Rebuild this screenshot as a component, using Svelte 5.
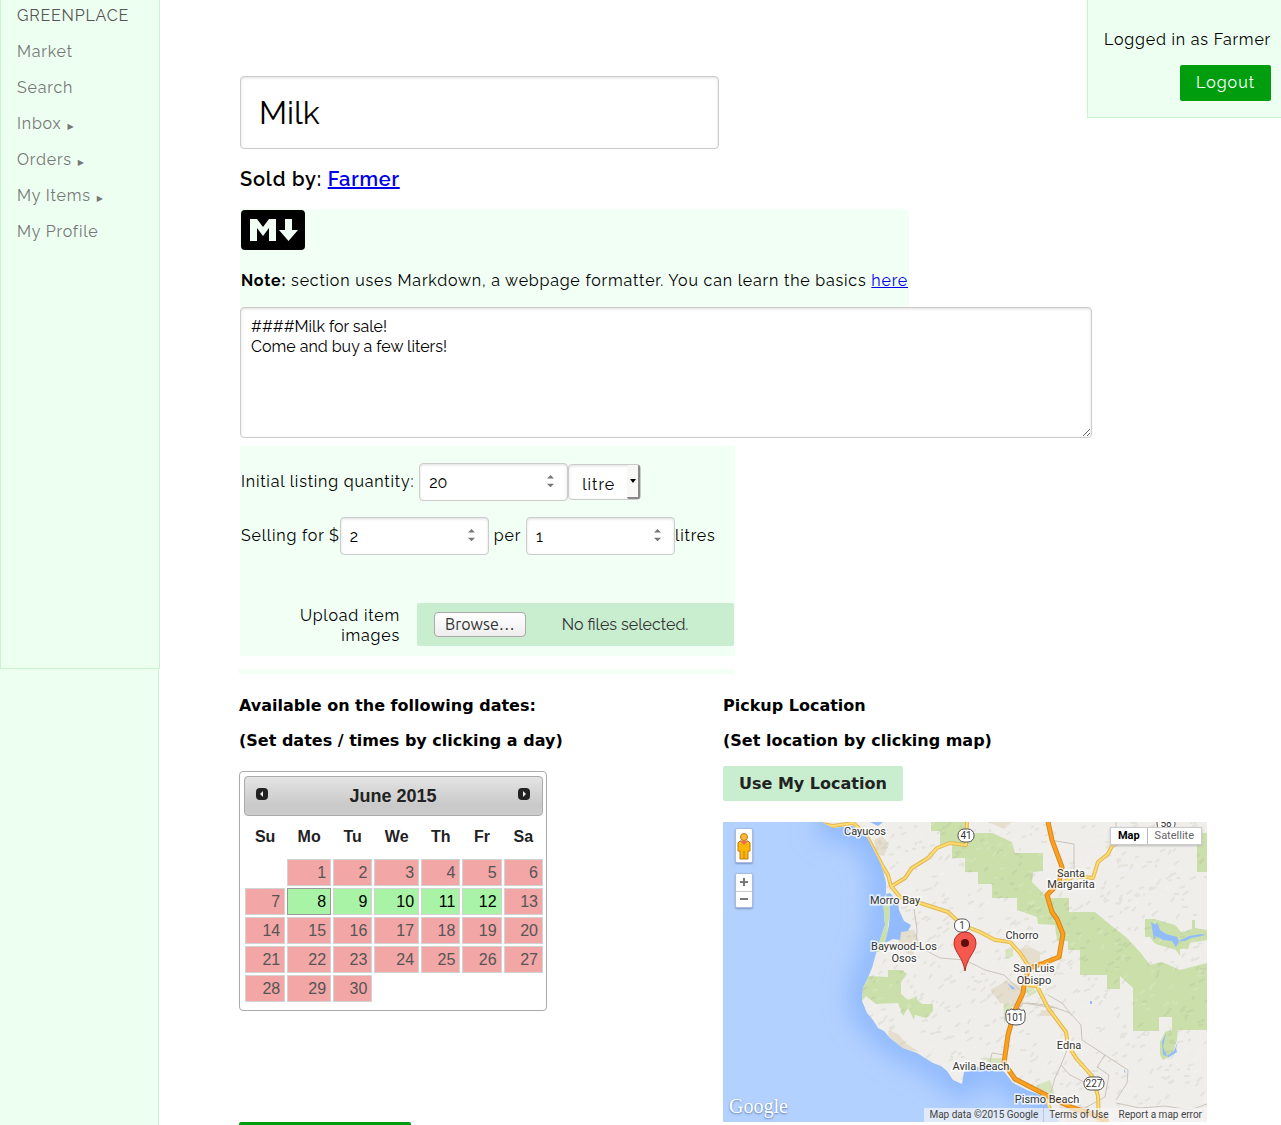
<script>
  const navItems = [
    { label: 'Market' },
    { label: 'Search' },
    { label: 'Inbox', sub: true },
    { label: 'Orders', sub: true },
    { label: 'My Items', sub: true },
    { label: 'My Profile' }
  ];

  const weekdays = ['Su', 'Mo', 'Tu', 'We', 'Th', 'Fr', 'Sa'];
  const weeks = [0, 1, 2, 3, 4].map((w) =>
    weekdays.map((_, d) => {
      const day = w * 7 + d;
      return day >= 1 && day <= 30 ? day : null;
    })
  );
  const isOpen = (day) => day >= 8 && day <= 12;

  let title = $state('Milk');
  let description = $state('####Milk for sale!\nCome and buy a few liters!');
  let quantity = $state(20);
  let price = $state(2);
  let per = $state(1);

  // Small strokes that suggest hill relief on the land.
  function relief(count, seed) {
    let s = seed;
    const rnd = () => {
      s = (s * 16807) % 2147483647;
      return s / 2147483647;
    };
    let d = '';
    for (let i = 0; i < count; i++) {
      const x = Math.round(860 + rnd() * 347);
      const y = Math.round(822 + rnd() * 300);
      const a = Math.round(2 + rnd() * 4);
      const b = Math.round(-5 + rnd() * 5);
      d += `M${x} ${y}l${a} ${b}`;
    }
    return d;
  }
  const darkRelief = relief(700, 77);
  const lightRelief = relief(400, 911);

  const land =
    'M822 822L833 828L853 826L866 835L874 850L881 864L886 882L886 894L883 900L885 925L880 940L877 950L872 968L867 980L863 988L862 1001L867 1013L873 1020L878 1028L884 1031L890 1038L903 1048L917 1053L933 1063L941 1066L947 1071L953 1080L962 1084L964 1072L977 1067L1003 1070L1013 1083L1027 1090L1043 1096L1048 1107L1060 1122H1207V822Z';

  const labels = [
    [865, 835, 'Cayucos'],
    [895, 904, 'Morro Bay'],
    [904, 950, 'Baywood-Los'],
    [904, 962, 'Osos'],
    [1071, 877, 'Santa'],
    [1071, 888, 'Margarita'],
    [1022, 939, 'Chorro'],
    [1034, 972, 'San Luis'],
    [1034, 984, 'Obispo'],
    [1069, 1049, 'Edna'],
    [981, 1070, 'Avila Beach'],
    [1047, 1103, 'Pismo Beach']
  ];
  const shields = [
    [966, 835, 16, '41'],
    [962, 925, 15, '1'],
    [1166, 823, 18, '58'],
    [1094, 1083, 20, '227']
  ];
</script>

<div class="page">
  <aside class="sidebar">
    <nav class="menu">
      <a class="brand" href="#home">GREENPLACE</a>
      {#each navItems as item}
        <a href="#{item.label}">{item.label}{#if item.sub}<span class="arrow">▶</span>{/if}</a>
      {/each}
    </nav>
  </aside>

  <main>
    <div class="account">
      <p>Logged in as Farmer</p>
      <button class="btn primary">Logout</button>
    </div>

    <input class="box title" aria-label="Item title" bind:value={title} />
    <h3>Sold by: <a href="#farmer">Farmer</a></h3>

    <div class="note">
      <svg class="md" viewBox="0 0 64 40" role="img" aria-label="Markdown">
        <rect width="64" height="40" rx="4" />
        <path
          fill="#f1fff5"
          d="M9 31V9h7l6 8l6-8h7v22h-7V18l-6 8l-6-8v13ZM44 9h7v11h6L47.500 31L38 20h6Z"
        />
      </svg>
      <p><b>Note:</b> section uses Markdown, a webpage formatter. You can learn the basics <a href="#markdown">here</a></p>
    </div>

    <textarea class="box" aria-label="Description" bind:value={description}></textarea>

    <form class="listing" onsubmit={(e) => e.preventDefault()}>
      <div class="row">
        <label class="gap" for="qty">Initial listing quantity:</label>
        <span class="num">
          <input class="box" id="qty" type="number" bind:value={quantity} />
          <svg viewBox="0 0 8 14"><path d="M0 4L4 0L8 4ZM0 10L4 14L8 10Z" /></svg>
        </span>
        <span class="unit">
          <select class="box" aria-label="Unit"><option>litre</option></select>
          <i></i>
        </span>
      </div>
      <div class="row">
        <label for="price">Selling for $</label>
        <span class="num">
          <input class="box" id="price" type="number" bind:value={price} />
          <svg viewBox="0 0 8 14"><path d="M0 4L4 0L8 4ZM0 10L4 14L8 10Z" /></svg>
        </span>
        <label class="mid" for="per">per</label>
        <span class="num">
          <input class="box" id="per" type="number" bind:value={per} />
          <svg viewBox="0 0 8 14"><path d="M0 4L4 0L8 4ZM0 10L4 14L8 10Z" /></svg>
        </span>
        <span>litres</span>
      </div>
      <div class="upload">
        <label for="files">Upload item images</label>
        <label class="picker" for="files">
          <input id="files" type="file" multiple />
          <span class="browse">Browse…</span>
          <span>No files selected.</span>
        </label>
      </div>
    </form>
    <div class="strip"></div>

    <div class="columns">
      <section>
        <h4>Available on the following dates:</h4>
        <h4>(Set dates / times by clicking a day)</h4>
        <div class="calendar">
          <div class="cal-head">
            <button aria-label="Previous month">
              <svg viewBox="0 0 12 12"><rect width="12" height="12" rx="4" /><path fill="#eee" d="M7 3v6L4 6Z" /></svg>
            </button>
            <span>June 2015</span>
            <button aria-label="Next month">
              <svg viewBox="0 0 12 12"><rect width="12" height="12" rx="4" /><path fill="#eee" d="M5 3v6L8 6Z" /></svg>
            </button>
          </div>
          <table>
            <thead>
              <tr>{#each weekdays as d}<th>{d}</th>{/each}</tr>
            </thead>
            <tbody>
              {#each weeks as week}
                <tr>
                  {#each week as day}
                    <td>
                      {#if day}
                        <button class="day" class:open={isOpen(day)} class:today={day === 8} disabled={!isOpen(day)}>{day}</button>
                      {/if}
                    </td>
                  {/each}
                </tr>
              {/each}
            </tbody>
          </table>
        </div>
      </section>

      <section>
        <h4>Pickup Location</h4>
        <h4>(Set location by clicking map)</h4>
        <button class="btn locate">Use My Location</button>
        <div class="map">
          <svg class="tiles" viewBox="723 822 484 300" preserveAspectRatio="xMinYMin slice">
            <defs>
              <filter id="soft" x="-20%" y="-20%" width="140%" height="140%"><feGaussianBlur stdDeviation="13" /></filter>
              <clipPath id="land"><path d={land} /></clipPath>
            </defs>
            <rect x="723" y="822" width="484" height="300" fill="#b3d1ff" />
            <path d={land} fill="none" stroke="#7fadfb" stroke-opacity=".75" stroke-width="26" filter="url(#soft)" />
            <path d={land} fill="#f0eeea" />

            <g clip-path="url(#land)">
              <g fill="#cadfaa">
                <path d="M931 822V831H940V845H952V858H965V872H978V884H992V898H1017V910L1037 917L1038 924L1055 925L1057 941H1068V950H1080V975H1107V989H1120V976L1133 988V1031H1159V1017H1172V1030H1207V963L1180 970L1162 962L1150 965L1140 952L1127 938L1107 922L1095 912H1069V898H1052L1045 895L1032 882L1033 872L1043 871V853H1015L1012 842L992 833H967V822Z" />
                <path d="M1197 833H1207V872H1197ZM1145 919H1155L1164 922L1175 925L1182 933L1192 929V920H1195V928L1207 930V940L1190 943L1188 949H1180V956L1176 950L1166 947L1155 944L1150 937H1145Z" />
                <path d="M1160 1042L1165 1032L1178 1028L1177 1040L1172 1055L1163 1060L1160 1055Z" />
                <path d="M868 976L888 977V970H902L907 974L901 982V994L908 1000L917 996V1000L922 1004H933V1011L926 1018L915 1015L914 1020L908 1008L903 1016L898 1003L876 1004L866 996L862 1001L862 985Z" />
                <path d="M1003 983L1018 986L1016 1000L1004 1024ZM1037 1085L1050 1080L1055 1095L1045 1098L1035 1092ZM985 1058H1005V1066L988 1062ZM1024 982H1030L1037 992L1030 996L1023 990ZM1005 950L1013 948V956L1006 959Z" opacity=".7" />
              </g>
              <path fill="#e5decf" d="M874 840l8-4l7 8l-5 12l-8-2zM898 930l16 0l6 12l-8 14l-13-8zM888 1030l10 4l9 10l12 8l-16-3l-14-12zM990 990l16-9l20 6l-4 20l-22-4zM1016 950l14-3l10 5v14h-14zM1041 1010h14l-3 6h-12zM1058 1103l30 4l18 15h-40zM988 822h24l-8 7z" />
              <path d={darkRelief} fill="none" stroke="#8d907c" stroke-opacity=".12" stroke-width="2" />
              <path d={lightRelief} fill="none" stroke="#fff" stroke-opacity=".15" stroke-width="2" />
              <path fill="#cadfaa" d="M882 895L887 894L890 912L886 940L879 952H874Z" />
              <g fill="#91bbfb">
                <path d="M886 894L890 893L898 902L899 910L904 921L911 925L908 931L901 932L900 940L893 939L885 943L889 925L890 912L889 902Z" />
                <path d="M870 822h13l-5 4zM1151 922l5 3l1-3l3 8l6 4l11 3l2 4l10-5l12-2l5 1l-15 3l-6 3l-6 0l-3 6l-4-6l-9-1l-7-4l-2 4z" />
                <path d="M1166 1033l-4 9l1 13l6 2l8-5l2 6l-3-9l2-8l-4 10l-7 5l-4-9zM1007 983l8 5l-2 2zM1124 1069l2 4l-2-1zM1090 1001h2v3h-2z" />
              </g>
              <g fill="none" stroke="#c9c4bb">
                <path d="M1050 822V840L1074 844V875M1116 822V833M914 909L917 930L916 945L940 958L965 960L985 970L1004 975L1022 992M1027 1003L1048 1005L1070 1013L1081 1025L1082 1040L1105 1055L1128 1070L1127 1083L1116 1100M1105 1055L1097 1067L1109 1075L1105 1097L1085 1108M1048 995L1062 1003L1070 1013M1069 1045L1061 1065L1070 1075L1090 1085M1061 1065L1055 1078L1050 1095M1015 1015L1023 1003L1055 1008M1116 1103L1140 1108L1165 1106L1190 1110L1207 1104M1004 1055L992 1053L990 1062" />
              </g>
              <g fill="none" stroke-linejoin="round">
                <g stroke="#e3b750" stroke-width="4">
                  <path id="y1" d="M822 824L833 826L853 823L865 833L873 848L882 865L888 875L891 886L900 897L920 903L948 912L962 925L980 932L995 940L1010 942L1020 953L1030 968" />
                  <path id="y2" d="M892 886L905 878L912 868L928 858L937 848L950 843L966 845L967 822M1058 885L1075 876L1093 878L1098 862L1108 854L1112 846L1125 840L1150 835" />
                  <path id="y3" d="M1028 985L1037 986L1048 1008L1066 1032L1068 1045L1076 1058L1092 1076L1098 1096L1099 1122M1046 1097L1054 1122" />
                </g>
                <g stroke="#fcdb71" stroke-width="2">
                  <use href="#y1" /><use href="#y2" /><use href="#y3" />
                </g>
                <path stroke="#db861a" stroke-width="5" d="M1048 822L1052 840L1062 867L1059 883L1047 895L1052 912L1057 919L1063 934L1059 957L1044 963L1030 968L1025 978L1023 993L1015 1010L1008 1035L1004 1063L1015 1079L1046 1095L1073 1108L1092 1114L1108 1122" />
                <path stroke="#faa11f" stroke-width="3" d="M1048 822L1052 840L1062 867L1059 883L1047 895L1052 912L1057 919L1063 934L1059 957L1044 963L1030 968L1025 978L1023 993L1015 1010L1008 1035L1004 1063L1015 1079L1046 1095L1073 1108L1092 1114L1108 1122" />
              </g>
            </g>

            <g class="shield">
              {#each shields as [x, y, w, t]}
                <rect x={x - w / 2} y={y - 6} width={w} height="13" rx="6" />
                <text {x} y={y + 4}>{t}</text>
              {/each}
              <path d="M1007 1010q3 1 4-1q4 2 8 0q2 2 5 1q2 4 1 7q1 8-9 8q-11 0-10-8q-1-3 1-7Z" />
              <text x="1015" y="1021">101</text>
            </g>
            <g class="places">
              {#each labels as [x, y, t]}
                <text {x} {y}>{t}</text>
              {/each}
            </g>
            <path d="M965 971C963 957 954 952 954 943a11 11 0 0 1 22 0C976 952 967 957 965 971Z" fill="#f6584d" stroke="#b03028" />
            <circle cx="965" cy="943" r="4" fill="#5c100c" />
          </svg>

          <div class="controls">
            <button class="ctl peg" aria-label="Street view">
              <svg viewBox="0 0 14 28">
                <path d="M3 9h8l2 2v8h-2v8H3v-8H1v-8Z" fill="#fbb606" stroke="#c07a10" />
                <circle cx="7" cy="5" r="3.500" fill="#fbb93a" stroke="#c07a10" />
                <path d="M3 9h8l-4 4Z" fill="#ee6a5a" />
                <path d="M7 19v8" stroke="#c07a10" />
              </svg>
            </button>
            <div class="ctl zoom">
              <button aria-label="Zoom in"><svg viewBox="0 0 8 8"><path d="M0 3h3V0h2v3h3v2H5v3H3V5H0Z" /></svg></button>
              <button aria-label="Zoom out"><svg viewBox="0 0 8 8"><path d="M0 3h8v2H0Z" /></svg></button>
            </div>
          </div>
          <div class="types">
            <button class="on">Map</button><button>Satellite</button>
          </div>
          <span class="logo">Google</span>
          <div class="credits">
            <span>Map data ©2015 Google</span>
            <a href="#terms">Terms of Use</a>
            <a href="#report">Report a map error</a>
          </div>
        </div>
      </section>
    </div>

    <button class="btn primary save" aria-label="Save"></button>
  </main>
</div>

<style>
  :global(body) {
    background: #fff;
  }
  * {
    box-sizing: border-box;
  }
  .page {
    display: flex;
    height: 100vh;
    overflow: hidden;
    font-family: Raleway, Lato, sans-serif;
    font-size: 16px;
    line-height: 20px;
    letter-spacing: 0.05em;
    color: #000;
  }
  button,
  input,
  select,
  textarea {
    font: inherit;
    color: inherit;
    margin: 0;
  }
  button {
    border: 0;
    padding: 0;
    background: none;
    cursor: pointer;
  }
  p,
  h3,
  h4 {
    margin: 0;
  }
  a {
    color: #00e;
  }

  .sidebar {
    flex: 0 0 159px;
    min-width: 0;
    background: #edfff1;
    border-right: 1px solid #c8f5d0;
  }
  .menu {
    position: relative;
    display: flex;
    flex-direction: column;
    width: 160px;
    height: 669px;
    background: #edfff1;
    border: 1px solid #c8f5d0;
    border-top: 0;
  }
  .menu a {
    padding: 8px 16px;
    height: 36px;
    color: #777;
    text-decoration: none;
  }
  .menu .brand {
    padding-top: 6px;
    height: 34px;
    color: #555;
  }
  .arrow {
    margin-left: 6px;
    font-family: 'DejaVu Sans', sans-serif;
    font-size: 8px;
    line-height: 8px;
  }

  main {
    position: relative;
    flex: 1;
    min-width: 0;
    padding: 76px 74px 40px 80px;
    overflow-y: auto;
    scrollbar-width: none;
  }
  .account {
    position: absolute;
    top: 0;
    right: 0;
    padding: 30px 10px 16px 16px;
    background: #edfff1;
    border: solid #c8f5d0;
    border-width: 0 0 1px 1px;
    text-align: right;
  }
  .account p {
    margin-bottom: 15px;
  }
  .btn {
    padding: 8px 16px;
    border-radius: 2px;
    letter-spacing: 1px;
  }
  .primary {
    background: #009e0f;
    color: #fff;
  }

  .box {
    border: 1px solid #ccc;
    border-radius: 4px;
    background: #fff;
    box-shadow: inset 0 1px 3px #ddd;
    outline: 0;
  }
  .title {
    display: block;
    width: calc(50% - 5px);
    height: 73px;
    margin-left: 1px;
    padding: 0 18px;
    font-size: 32px;
    line-height: 40px;
  }
  h3 {
    margin: 18px 1px;
    font-size: 20px;
    line-height: 24px;
    font-weight: 600;
  }
  .note {
    width: fit-content;
    margin-left: 1px;
    padding: 1px 1px 16px;
    background: #f1fff5;
  }
  .md {
    display: block;
    width: 64px;
    height: 40px;
    margin-bottom: 21px;
  }
  textarea {
    display: block;
    width: 88%;
    height: 131px;
    margin-left: 1px;
    padding: 9px 10px;
    resize: both;
  }

  .listing {
    width: 495px;
    margin: 8px 0 0 1px;
    padding: 17px 1px 10px;
    background: #f1fff5;
  }
  .row {
    display: flex;
    align-items: center;
    height: 38px;
    margin-bottom: 16px;
  }
  .gap {
    margin-right: 5px;
  }
  .mid {
    margin: 0 5px;
  }
  .num {
    position: relative;
    width: 149px;
    height: 38px;
  }
  .num input {
    width: 100%;
    height: 100%;
    padding: 0 9px;
    appearance: textfield;
  }
  .num input::-webkit-inner-spin-button {
    appearance: none;
  }
  .num svg {
    position: absolute;
    right: 14px;
    top: 12px;
    width: 7px;
    fill: #777;
  }
  .unit {
    position: relative;
    width: 73px;
    height: 36px;
  }
  .unit select {
    width: 100%;
    height: 100%;
    padding: 5px 12px 0 13px;
    appearance: none;
    letter-spacing: 1px;
  }
  .unit i {
    position: absolute;
    top: 1px;
    right: 1px;
    bottom: 1px;
    width: 13px;
    background: #f8f8f6;
    border: solid #888;
    border-width: 0 2px 2px 0;
    border-radius: 2px;
    pointer-events: none;
  }
  .unit i::after {
    content: '';
    display: block;
    width: 0;
    margin: 14px 0 0 3px;
    border: 3px solid transparent;
    border-top: 4px solid #000;
  }
  .upload {
    display: flex;
    justify-content: flex-end;
    margin-top: 48px;
    text-align: right;
  }
  .upload > label:first-child {
    width: 110px;
    margin-right: 17px;
    padding-top: 3px;
  }
  .upload .picker {
    display: flex;
    align-items: center;
    gap: 36px;
    width: 317px;
    height: 43px;
    padding: 0 17px;
    background: #c9edcf;
    border-radius: 2px;
    color: #333;
    letter-spacing: 0;
  }
  .picker input {
    position: absolute;
    width: 1px;
    height: 1px;
    opacity: 0;
  }
  .browse {
    padding: 1px 10px 2px;
    border: 1px solid #aaa;
    border-radius: 4px;
    background: linear-gradient(#fff, #eee);
    font-family: Ubuntu, 'Noto Sans', sans-serif;
  }
  .strip {
    width: 495px;
    height: 5px;
    margin-top: 13px;
    background: #f1fff5;
  }

  .columns {
    display: grid;
    grid-template-columns: 1fr 1fr;
    margin-top: 22px;
    letter-spacing: 0;
  }
  h4 {
    margin-bottom: 15px;
    font: bold 16px/20px 'DejaVu Sans', sans-serif;
  }
  .locate {
    display: block;
    margin: 15px 0 21px;
    height: 35px;
    background: #c9edcf;
    color: #222;
    font: bold 16px/19px 'DejaVu Sans', sans-serif;
    letter-spacing: 0;
  }

  .calendar {
    width: 308px;
    height: 240px;
    margin-top: 20px;
    padding: 4px 3px 0 4px;
    border: 1px solid #aaa;
    border-radius: 4px;
    font-family: 'Liberation Sans', Arial, sans-serif;
    color: #222;
  }
  .cal-head {
    display: flex;
    justify-content: space-between;
    height: 40px;
    padding: 9px 12px 9px 11px;
    border: 1px solid #aaa;
    border-radius: 4px;
    background: linear-gradient(#e4e4e4, #c9c9c9 75%, #ccc);
    font-weight: bold;
    font-size: 18px;
  }
  .cal-head button {
    width: 12px;
    height: 20px;
    padding-bottom: 4px;
  }
  .cal-head svg {
    display: block;
    width: 12px;
    height: 12px;
    fill: #222;
  }
  table {
    width: 300px;
    border-collapse: collapse;
  }
  th {
    height: 42px;
    padding: 0 5px;
  }
  td {
    height: 29px;
    padding: 1px;
  }
  .day {
    display: block;
    width: 100%;
    height: 27px;
    padding: 0 4px;
    border: 1px solid #d3d3d3;
    background: #f2a6a6;
    color: #555;
    text-align: right;
  }
  .open {
    background: #a9f3a6;
    color: #000;
  }
  .today {
    border-color: #999;
  }

  .map {
    position: relative;
    height: 300px;
    overflow: hidden;
    font: 11px/16px Roboto, sans-serif;
  }
  .tiles {
    display: block;
    width: 100%;
    height: 100%;
  }
  .places text,
  .shield text {
    text-anchor: middle;
    font-size: 11px;
    fill: #333;
  }
  .places text {
    paint-order: stroke;
    stroke: #fff;
    stroke-width: 3px;
    stroke-opacity: 0.8;
  }
  .shield text {
    font-size: 10px;
  }
  .shield rect,
  .shield path {
    fill: #fff;
    stroke: #555;
  }
  .controls {
    position: absolute;
    top: 6px;
    left: 12px;
    display: grid;
    gap: 10px;
  }
  .ctl {
    width: 18px;
    height: 35px;
    border: 1px solid #a9bbdf;
    border-radius: 2px;
    background: #fff;
    box-shadow: 0 1px 2px #7a93bd;
  }
  .peg svg {
    display: block;
    width: 14px;
    margin: auto;
  }
  .zoom {
    display: grid;
    grid-template-rows: 1fr 1fr;
  }
  .zoom button + button {
    border-top: 1px solid #ccc;
  }
  .zoom svg {
    display: block;
    width: 8px;
    margin: auto;
    fill: #777;
  }
  .types {
    position: absolute;
    top: 5px;
    right: 5px;
    display: flex;
    background: #fff;
    border: 1px solid #ccc;
    box-shadow: 0 1px 2px #bbb;
  }
  .types button {
    padding: 0 7px;
    color: #666;
  }
  .types .on {
    border-right: 1px solid #bbb;
    font-weight: bold;
    color: #000;
  }
  .logo {
    position: absolute;
    left: 6px;
    bottom: 5px;
    color: #fff;
    font: 20px/22px 'Liberation Serif', serif;
    text-shadow: 0 1px 2px #5577aa;
  }
  .credits {
    position: absolute;
    right: 0;
    bottom: 0;
    display: flex;
    height: 14px;
    background: rgba(245, 245, 245, 0.7);
    font-size: 10px;
    line-height: 14px;
  }
  .credits > * {
    padding: 0 5px;
    color: #444;
    text-decoration: none;
  }
  .credits span {
    border-right: 1px solid #b9c8e0;
  }
  .save {
    display: block;
    width: 172px;
    height: 36px;
  }
</style>
